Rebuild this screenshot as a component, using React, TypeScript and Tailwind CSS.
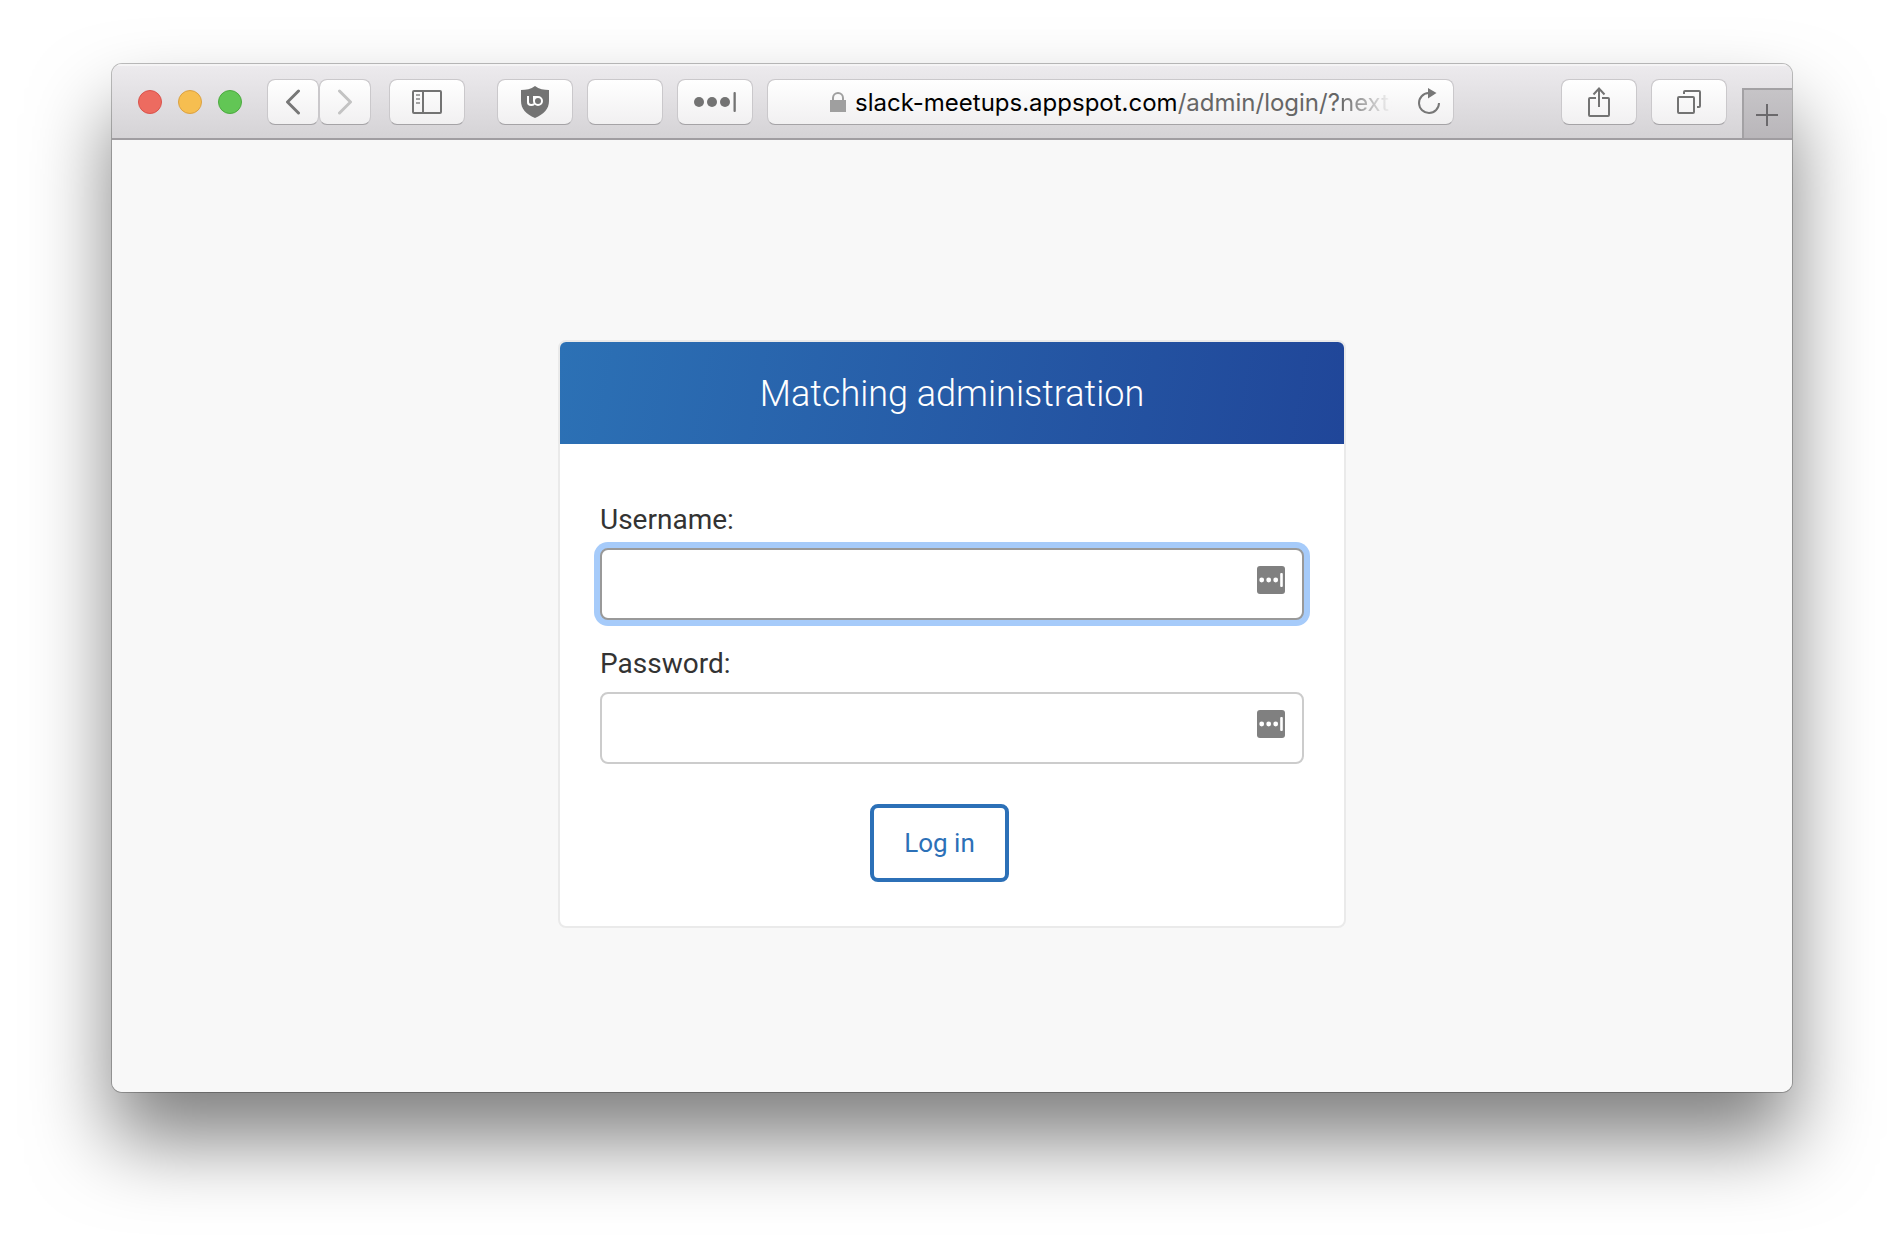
import React from "react";

const toolButton =
  "flex h-[46px] w-[76px] shrink-0 items-center justify-center rounded-lg border border-[#cac8cb] border-b-[#a5a3a6] bg-linear-to-b from-white to-[#f1f0f1] bg-clip-padding";

function ManagerDots() {
  return (
    <svg width="28" height="28" viewBox="0 0 28 28" aria-hidden="true">
      <rect width="28" height="28" rx="3" fill="#808080" />
      <g fill="#fff">
        <circle cx="4.7" cy="14" r="2.4" />
        <circle cx="11.7" cy="14" r="2.4" />
        <circle cx="18.7" cy="14" r="2.4" />
        <rect x="23.2" y="7" width="2.6" height="14" rx="1" />
      </g>
    </svg>
  );
}

function Toolbar() {
  return (
    <header className="flex h-[76px] items-center border-b-2 border-[#a09da1] bg-linear-to-b from-[#edebee] to-[#d5d3d6] pt-[2px] pl-[26px] shadow-[inset_0_2px_0_#f5f4f5]">
      <div className="flex shrink-0 gap-4">
        <button aria-label="Close" className="size-6 rounded-full border border-[#d9534c] bg-[#ed6b60]" />
        <button aria-label="Minimize" className="size-6 rounded-full border border-[#dba142] bg-[#f6be50]" />
        <button aria-label="Zoom" className="size-6 rounded-full border border-[#4caa3f] bg-[#62c655]" />
      </div>
      <div className="ml-[25px] flex shrink-0">
        <button aria-label="Back" className={`${toolButton} max-w-[52px]`}>
          <svg width="16" height="26" viewBox="0 0 16 26" fill="none" stroke="#777" strokeWidth="3" strokeLinecap="round" strokeLinejoin="round">
            <path d="M13.500 2 2.500 13l11 11" />
          </svg>
        </button>
        <button aria-label="Forward" className={`${toolButton} max-w-[52px]`}>
          <svg width="16" height="26" viewBox="0 0 16 26" fill="none" stroke="#c3c3c3" strokeWidth="3" strokeLinecap="round" strokeLinejoin="round">
            <path d="m2.500 2 11 11-11 11" />
          </svg>
        </button>
      </div>
      <button aria-label="Show sidebar" className={`${toolButton} ml-[18px]`}>
        <svg width="30" height="24" viewBox="0 0 30 24" fill="none" stroke="#737373" strokeWidth="2">
          <rect x="1" y="1" width="28" height="22" rx="1" />
          <path d="M11 1v22" />
          <path d="M4 5h4M4 9h4M4 13h4" stroke="#a3a3a3" />
        </svg>
      </button>
      <div className="ml-8 flex shrink-0 gap-[14px]">
        <button aria-label="Content blocker" className={toolButton}>
          <svg width="28" height="32" viewBox="0 0 28 32">
            <path d="M14 0c4 3 9 4 14 4v11c0 8-5 13-14 17C5 28 0 23 0 15V4c5 0 10-1 14-4Z" fill="#737373" />
            <g fill="none" stroke="#fff" strokeWidth="2">
              <path d="M7 10v6.200c0 1.700 1 2.800 3.200 2.800 1.300 0 2.200-.3 3-1M13 10v5" />
              <circle cx="17" cy="15" r="4" />
              <path d="M13 11h4" />
            </g>
          </svg>
        </button>
        <button aria-label="Extension" className={toolButton} />
        <button aria-label="Password manager" className={toolButton}>
          <svg width="42" height="22" viewBox="0 0 42 22" fill="#737373">
            <circle cx="5" cy="11" r="5" />
            <circle cx="18" cy="11" r="5" />
            <circle cx="31" cy="11" r="5" />
            <rect x="39.500" y="1" width="2.300" height="20" rx="1" />
          </svg>
        </button>
      </div>
      <div className="ml-[14px] flex h-[46px] min-w-0 flex-1 items-center rounded-lg border border-[#cac8cb] border-b-[#a5a3a6] bg-linear-to-b from-white to-[#f1f0f1] bg-clip-padding pr-[12px] pl-[61px]">
        <svg width="18" height="22" viewBox="0 0 18 22" className="mr-[8px] shrink-0">
          <rect x="1" y="9" width="16" height="12" fill="#9f9f9f" />
          <path d="M4 10V7a5 5 0 0 1 10 0v3" fill="none" stroke="#9f9f9f" strokeWidth="2" />
        </svg>
        <button aria-label="Address" className="min-w-0 flex-1 overflow-hidden pt-[2px] text-left font-['Inter'] text-2xl whitespace-nowrap text-black">
          slack-meetups.appspot.com
          <span className="text-[#666]">/admin/login/?</span>
          <span className="bg-linear-to-r from-[#666] to-[#66666600] to-80% bg-clip-text text-transparent">next=</span>
        </button>
        <button aria-label="Reload" className="shrink-0">
          <svg width="24" height="28" viewBox="0 0 24 28">
            <path d="M11.500 5a10 10 0 1 0 10.500 10" fill="none" stroke="#777" strokeWidth="2" />
            <path d="M11 0v10.500L19.500 5Z" fill="#777" />
          </svg>
        </button>
      </div>
      <div className="ml-[107px] flex shrink-0 gap-[14px]">
        <button aria-label="Share" className={toolButton}>
          <svg width="22" height="32" viewBox="0 0 22 32" fill="none" stroke="#737373" strokeWidth="2">
            <path d="M8 12H2a1 1 0 0 0-1 1v16a1 1 0 0 0 1 1h18a1 1 0 0 0 1-1V13a1 1 0 0 0-1-1h-6" />
            <path d="M11 2v19M5.500 8.500 11 2.500l5.500 6" />
          </svg>
        </button>
        <button aria-label="Show all tabs" className={toolButton}>
          <svg width="24" height="24" viewBox="0 0 24 24" fill="none" stroke="#737373" strokeWidth="2">
            <rect x="1" y="7" width="16" height="16" rx="1" />
            <path d="M7 4V2a1 1 0 0 1 1-1h14a1 1 0 0 1 1 1v14a1 1 0 0 1-1 1h-2" />
          </svg>
        </button>
      </div>
      <button aria-label="New tab" className="ml-[15px] flex h-[50px] w-[50px] shrink-0 items-center justify-center self-end border-t-2 border-l-2 border-[#a3a1a4] bg-linear-to-b from-[#c6c4c7] to-[#b9b6ba] pt-[2px] pr-[2px]">
        <svg width="22" height="22" viewBox="0 0 22 22" stroke="#6b696c" strokeWidth="2">
          <path d="M11 0v22M0 11h22" />
        </svg>
      </button>
    </header>
  );
}

function Field({ id, label, type, focused }: { id: string; label: string; type: string; focused?: boolean }) {
  return (
    <div className="flex flex-col">
      <label htmlFor={id} className="pt-6 pb-2 text-[28px] leading-10 text-[#333]">
        {label}
      </label>
      <div className="relative">
        <input
          id={id}
          type={type}
          className={
            focused
              ? "block h-[72px] w-full rounded-lg border-2 border-[#999] bg-white pr-16 pl-3 text-[28px] ring-6 ring-[#a6cbfa] outline-none"
              : "block h-[72px] w-full rounded-lg border-2 border-[#ccc] bg-white pr-16 pl-3 text-[28px] outline-none"
          }
        />
        <button type="button" aria-label={`Fill ${id}`} className="absolute top-[18px] right-[19px]">
          <ManagerDots />
        </button>
      </div>
    </div>
  );
}

export default function App() {
  return (
    <div className="min-h-screen bg-white px-28 pt-16 pb-40 font-['Roboto',sans-serif]">
      <div className="overflow-hidden rounded-[10px] shadow-[0_0_0_1px_rgba(0,0,0,0.25),0_48px_80px_rgba(0,0,0,0.5)]">
        <Toolbar />
        <main className="flex justify-center bg-[#f8f8f8] pt-[200px] pb-[164px]">
          <div className="w-full max-w-[788px] overflow-hidden rounded-lg border-2 border-[#eaeaea] bg-white">
            <h1 className="bg-linear-[100deg] from-[#2c71b5] to-[#204699] pt-7 pb-[26px] text-center text-4xl leading-[48px] font-light text-white">
              Matching administration
            </h1>
            <form className="px-10 pt-8 pb-11" onSubmit={(e) => e.preventDefault()}>
              <Field id="username" label="Username:" type="text" focused />
              <Field id="password" label="Password:" type="password" />
              <div className="mt-10 mr-[25px] flex justify-center">
                <button type="submit" className="h-[78px] rounded-lg border-4 border-[#2c70b7] bg-white px-[30px] text-[26px] text-[#2c70b7]">
                  Log in
                </button>
              </div>
            </form>
          </div>
        </main>
      </div>
    </div>
  );
}
